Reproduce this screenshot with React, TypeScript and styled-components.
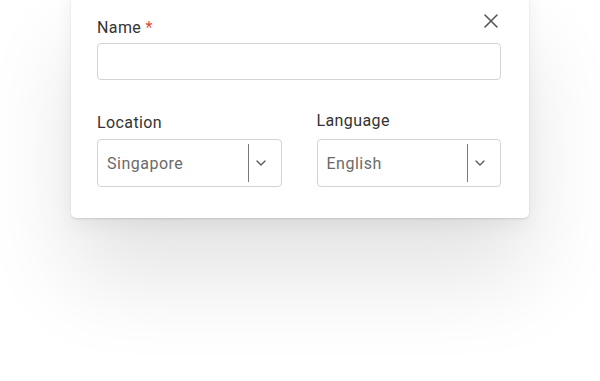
import styled, { createGlobalStyle } from "styled-components";

const GlobalStyle = createGlobalStyle`
  html, body {
    margin: 0;
    padding: 0;
    background: #ffffff;
  }
  body {
    font-family: Roboto, "Liberation Sans", Arial, sans-serif;
    color: #222;
  }
`;

type Option = { label: string; value: string; labelGap: number };

const fields: Option[] = [
  { label: "Location", value: "Singapore", labelGap: 6 },
  { label: "Language", value: "English", labelGap: 8 },
];

function Chevron() {
  return (
    <svg width="10" height="6" viewBox="0 0 10 6" fill="none">
      <path d="M1 1l4 4 4-4" stroke="#555" strokeWidth="1.3" strokeLinecap="round" strokeLinejoin="round" />
    </svg>
  );
}

function CloseIcon() {
  return (
    <svg width="14" height="14" viewBox="0 0 14 14" fill="none">
      <path d="M1 1l12 12M13 1L1 13" stroke="#555" strokeWidth="1.6" strokeLinecap="round" />
    </svg>
  );
}

export default function App() {
  return (
    <>
      <GlobalStyle />
      <Page>
        <Card>
          <CloseButton aria-label="Close">
            <CloseIcon />
          </CloseButton>
          <Field>
            <Label $gap={5}>
              Name <Required>*</Required>
            </Label>
            <TextInput type="text" />
          </Field>
          <Columns>
            {fields.map((f) => (
              <Field key={f.label} $top={f.labelGap === 8 ? -2 : 0}>
                <Label $gap={f.labelGap}>{f.label}</Label>
                <Select>
                  <SelectValue>{f.value}</SelectValue>
                  <Separator />
                  <Indicator>
                    <Chevron />
                  </Indicator>
                </Select>
              </Field>
            ))}
          </Columns>
        </Card>
      </Page>
    </>
  );
}

const Page = styled.div`
  width: 600px;
  height: 381px;
  overflow: hidden;
  display: flex;
  justify-content: center;
  align-items: flex-start;
`;

const Card = styled.div`
  position: relative;
  width: 458px;
  box-sizing: border-box;
  margin-top: -12px;
  padding: 30px 28px 31px 26px;
  background: #fff;
  border-radius: 0 0 5px 5px;
  box-shadow: 0 1px 2px rgba(0, 0, 0, 0.12), 0 8px 20px rgba(0, 0, 0, 0.05),
    0 60px 90px rgba(0, 0, 0, 0.11);
`;

const CloseButton = styled.button`
  position: absolute;
  top: 26px;
  right: 31px;
  width: 14px;
  height: 14px;
  padding: 0;
  border: none;
  background: none;
  display: flex;
  cursor: pointer;
`;

const Field = styled.div<{ $top?: number }>`
  display: flex;
  flex-direction: column;
  margin-top: ${(p) => p.$top ?? 0}px;
`;

const Label = styled.label<{ $gap: number }>`
  font-size: 16px;
  line-height: 20px;
  letter-spacing: 0.4px;
  color: #333;
  margin-bottom: ${(p) => p.$gap}px;
`;

const Required = styled.span`
  color: #e2492f;
`;

const TextInput = styled.input`
  height: 37px;
  box-sizing: border-box;
  border: 1px solid #d4d4d4;
  border-radius: 4px;
  outline: none;
  background: #fff;
`;

const Columns = styled.div`
  display: grid;
  grid-template-columns: 1fr 1fr;
  column-gap: 35px;
  margin-top: 33px;
`;

const Select = styled.div`
  height: 48px;
  box-sizing: border-box;
  border: 1px solid #d4d4d4;
  border-radius: 4px;
  display: flex;
  align-items: center;
  padding-left: 9px;
`;

const SelectValue = styled.span`
  flex: 1;
  font-size: 16px;
  letter-spacing: 0.5px;
  color: #6a6a6a;
`;

const Separator = styled.span`
  align-self: stretch;
  width: 1px;
  margin: 4px 0;
  background: #7a7a7a;
`;

const Indicator = styled.span`
  width: 32px;
  display: flex;
  align-items: center;
  padding-left: 7px;
  box-sizing: border-box;
`;
